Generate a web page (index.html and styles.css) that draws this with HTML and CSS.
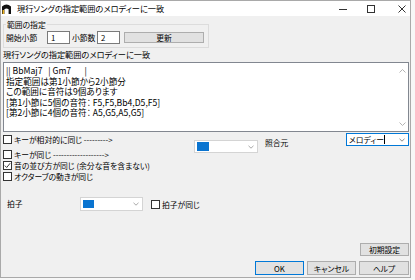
FILE: index.html
```html
<!DOCTYPE html>
<html lang="ja">
<head>
<meta charset="UTF-8">
<title>現行ソングの指定範囲のメロディーに一致</title>
<link rel="stylesheet" href="styles.css">
</head>
<body>
<div class="window">
    <div class="titlebar">
        <svg class="app-icon" width="9" height="10" viewBox="0 0 9 10">
            <path d="M0 10V2.5Q4.5-1.5 9 2.5V10H6.6V5.2Q4.5 3.6 2.4 5.2V10Z" fill="#111"/>
            <rect x="0.6" y="6" width="1.6" height="4" fill="#e8b020"/>
        </svg>
        <span class="title">現行ソングの指定範囲のメロディーに一致</span>
        <div class="caption">
            <svg class="cap cap-min" width="8" height="8" viewBox="0 0 8 8"><path d="M0 4.5H8" stroke="#333" stroke-width="1"/></svg>
            <svg class="cap cap-max" width="8" height="8" viewBox="0 0 8 8"><rect x="0.5" y="0.5" width="7" height="7" fill="none" stroke="#333" stroke-width="1"/></svg>
            <svg class="cap cap-close" width="8" height="8" viewBox="0 0 8 8"><path d="M0.5 0.5L7.5 7.5M7.5 0.5L0.5 7.5" stroke="#333" stroke-width="1"/></svg>
        </div>
    </div>

    <div class="content">
        <fieldset class="range">
            <legend>範囲の指定</legend>
            <div class="range-row">
                <span class="lbl lbl-start">開始小節</span>
                <span class="edit">1</span>
                <span class="lbl lbl-count">小節数</span>
                <span class="edit">2</span>
                <span class="btn btn-update">更新</span>
            </div>
        </fieldset>

        <div class="result-label">現行ソングの指定範囲のメロディーに一致</div>
        <div class="memo">
            <div class="memo-text">
                <div class="line">|| BbMaj7   | Gm7       |</div>
                <div class="line">指定範囲は第1小節から2小節分</div>
                <div class="line">この範囲に音符は9個あります</div>
                <div class="line">[第1小節に5個の音符： F5,F5,Bb4,D5,F5]</div>
                <div class="line">[第2小節に4個の音符： A5,G5,A5,G5]</div>
            </div>
            <div class="vscroll">
                <svg width="7" height="4" viewBox="0 0 7 4"><path d="M0.5 3.5L3.5 0.5L6.5 3.5" fill="none" stroke="#b4b4b4"/></svg>
                <svg width="7" height="4" viewBox="0 0 7 4"><path d="M0.5 0.5L3.5 3.5L6.5 0.5" fill="none" stroke="#b4b4b4"/></svg>
            </div>
        </div>

        <div class="opts">
            <div class="checks">
                <div class="chk"><span class="box"></span>キーが相対的に同じ ---------&gt;</div>
                <div class="chk"><span class="box"></span>キーが同じ -------------------&gt;</div>
                <div class="chk"><span class="box checked"><svg width="7" height="7" viewBox="0 0 7 7"><path d="M0.8 3.6L2.7 5.5L6.2 1.2" fill="none" stroke="#222" stroke-width="0.9"/></svg></span>音の並び方が同じ (余分な音を含まない)</div>
                <div class="chk"><span class="box"></span>オクターブの動きが同じ</div>
            </div>
            <div class="combo combo-key">
                <span class="swatch"></span>
                <svg class="chev" width="6" height="4" viewBox="0 0 6 4"><path d="M0.5 0.8L3 3.2L5.5 0.8" fill="none" stroke="#a8a8a8"/></svg>
            </div>
            <span class="lbl lbl-source">照合元</span>
            <div class="combo combo-source">
                <span class="combo-text">メロディー</span><span class="caret"></span>
                <svg class="chev" width="6" height="4" viewBox="0 0 6 4"><path d="M0.5 0.8L3 3.2L5.5 0.8" fill="none" stroke="#8a8a8a"/></svg>
            </div>
        </div>

        <div class="beat-row">
            <span class="lbl lbl-beat">拍子</span>
            <div class="combo combo-beat">
                <span class="swatch"></span>
                <svg class="chev" width="6" height="4" viewBox="0 0 6 4"><path d="M0.5 0.8L3 3.2L5.5 0.8" fill="none" stroke="#a8a8a8"/></svg>
            </div>
            <div class="chk chk-beat"><span class="box"></span>拍子が同じ</div>
        </div>

        <div class="buttons">
            <div class="btn btn-reset">初期設定</div>
            <div class="btn-row">
                <div class="btn btn-ok">OK</div>
                <div class="btn">キャンセル</div>
                <div class="btn btn-help">ヘルプ</div>
            </div>
        </div>
    </div>
</div>
</body>
</html>
```

FILE: styles.css
```css
* {
    box-sizing: border-box;
}

body {
    margin: 0;
    background-color: #f7f7f7;
    font-family: "Noto Sans CJK JP", "Noto Sans", sans-serif;
    font-feature-settings: "palt" 1;
    font-size: 7.8px;
    color: #000;
}

.window {
    width: 411px;
    height: 278px;
    border: 1px solid #a9a9a9;
    background-color: #f0f0f0;
}

.titlebar {
    display: flex;
    align-items: center;
    height: 15px;
    background-color: #fff;
}

.app-icon {
    margin-left: 1px;
}

.title {
    margin-left: 6px;
    font-size: 8.2px;
    line-height: 15px;
}

.caption {
    display: flex;
    align-items: center;
    margin-left: auto;
    margin-right: 4px;
}

.cap-max {
    margin-left: 20px;
}

.cap-close {
    margin-left: 23px;
}

.content {
    padding: 4px 0 0 2px;
}

/* groupe : plage */
.range {
    width: 206px;
    margin: 0;
    padding: 2px 2px 3px 2px;
    min-width: 0;
    border: 1px solid #dcdcdc;
}

.range legend {
    padding: 0 1px;
    line-height: 9px;
}

.range-row {
    display: flex;
    align-items: center;
    height: 13px;
}

.lbl {
    line-height: 12px;
    white-space: nowrap;
}

.lbl-start {
    width: 41px;
}

.lbl-count {
    width: 25px;
    margin-left: 2px;
}

.edit {
    width: 23px;
    height: 13px;
    padding-left: 3px;
    line-height: 11px;
    background-color: #fff;
    border: 1px solid #7a7a7a;
}

.btn {
    display: flex;
    align-items: center;
    justify-content: center;
    height: 13px;
    background-color: #e1e1e1;
    border: 1px solid #adadad;
    white-space: nowrap;
}

.btn-update {
    width: 80px;
    height: 11px;
    margin-left: 4px;
}

.result-label {
    margin-top: 2px;
    font-size: 8.2px;
    line-height: 9px;
}

.memo {
    display: flex;
    height: 70px;
    margin-top: 3px;
    margin-right: 1px;
    background-color: #fff;
    border: 1px solid #828790;
}

.memo-text {
    flex: 1;
    padding: 2px 0 0 2px;
    font-size: 8.6px;
    line-height: 10.6px;
}

.memo-text .line {
    white-space: pre;
}

.vscroll {
    display: flex;
    flex-direction: column;
    justify-content: space-between;
    align-items: center;
    width: 12px;
    padding: 6px 0 5px;
}

/* options */
.opts {
    display: flex;
    align-items: flex-start;
    margin-top: 1px;
    margin-right: 1px;
}

.checks {
    width: 191px;
}

.chk {
    display: flex;
    align-items: center;
    height: 11px;
    white-space: nowrap;
}

.checks .chk:first-child {
    margin-top: 1px;
}

.checks .chk:nth-child(2) {
    margin-top: 4px;
}

.box {
    display: flex;
    align-items: center;
    justify-content: center;
    width: 9px;
    height: 9px;
    margin-right: 2px;
    background-color: #fff;
    border: 1px solid #333;
}

.combo {
    display: flex;
    align-items: center;
    height: 13px;
    padding: 0 3px 0 2px;
    background-color: #fff;
    border: 1px solid #d4d4d4;
}

.swatch {
    width: 12px;
    height: 9px;
    background-color: #0a74d0;
}

.chev {
    margin-left: auto;
}

.combo-key {
    width: 64px;
    margin-top: 7px;
}

.lbl-source {
    margin-left: 7px;
    margin-top: 4px;
}

.combo-source {
    width: 63px;
    margin-left: auto;
    border-color: #0078d7;
}

.caret {
    width: 1px;
    height: 9px;
    background-color: #000;
}

.beat-row {
    display: flex;
    align-items: center;
    height: 14px;
    margin-top: 15px;
}

.lbl-beat {
    width: 77px;
    padding-left: 4px;
}

.combo-beat {
    width: 63px;
    height: 14px;
}

.combo-beat .swatch {
    width: 11px;
    height: 8px;
}

.chk-beat {
    margin-left: 8px;
}

/* boutons */
.buttons {
    display: flex;
    flex-direction: column;
    align-items: flex-end;
    margin-top: 32px;
    margin-right: 1px;
}

.btn-reset {
    width: 49px;
}

.btn-row {
    display: flex;
    gap: 3px;
    margin-top: 5px;
}

.btn-row .btn {
    width: 49px;
    height: 14px;
}

.btn-row .btn-help {
    width: 50px;
}

.btn-ok {
    border-color: #0078d7;
}
```
